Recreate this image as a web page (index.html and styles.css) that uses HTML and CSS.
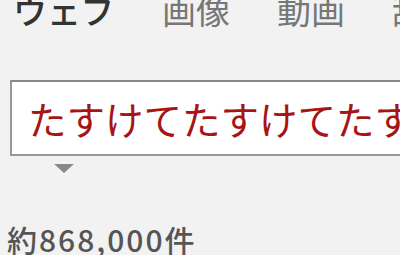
FILE: index.html
```html
<!DOCTYPE html>
<html>
<head>
  <meta charset="UTF-8">
  <title>検索結果</title>
  <meta name="viewport" content="width=device-width, initial-scale=1.0">
  <link rel="stylesheet" href="styles.css">
</head>
<body>
  <div class="tabs">
    <span class="tab active">ウェブ</span>
    <span class="tab">画像</span>
    <span class="tab">動画</span>
    <span class="tab">辞書</span>
  </div>

  <div class="search">
    <div class="box">たすけてたすけてたすけて</div>
    <div class="arrow"></div>
  </div>

  <div class="count">約868,000件</div>
</body>
</html>
```

FILE: styles.css
```css
* {
  box-sizing: border-box;
}

html, body {
  margin: 0;
  height: 100%;
  overflow: hidden;
}

body {
  font-family: "Noto Sans CJK JP", sans-serif;
  background: #f2f2f2;
  width: 400px;
}

.tabs {
  display: flex;
  gap: 47px;
  margin-top: -14px;
  padding-left: 13px;
  font-size: 34px;
  line-height: 48px;
  color: #777;
  white-space: nowrap;
}

.tab.active {
  color: #333;
  font-weight: 500;
}

.search {
  margin-top: 46px;
  padding-left: 10px;
}

.box {
  width: 600px;
  height: 76px;
  border: 2px solid #999;
  border-top-color: #888;
  background: #fff;
  color: #a81414;
  font-size: 38.5px;
  line-height: 72px;
  padding-left: 16px;
  white-space: nowrap;
  overflow: hidden;
}

.arrow {
  width: 0;
  height: 0;
  margin: 8px 0 0 44px;
  border-left: 10px solid transparent;
  border-right: 10px solid transparent;
  border-top: 9px solid #888;
}

.count {
  margin-top: 46px;
  padding-left: 7px;
  font-size: 30px;
  line-height: 40px;
  letter-spacing: 2px;
  font-weight: 500;
  color: #555;
}
```
